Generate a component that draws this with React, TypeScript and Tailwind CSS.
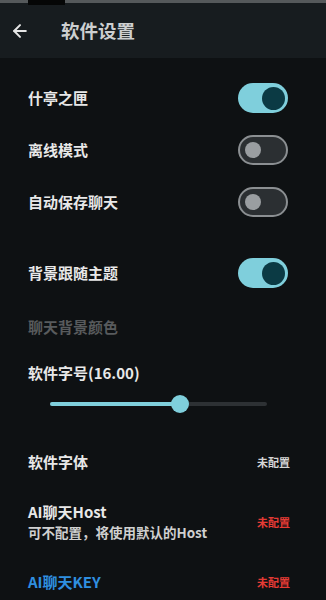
import { ArrowLeft } from "lucide-react";

const font = {
  fontFamily: '"Noto Sans CJK SC", "Noto Sans", sans-serif',
};

function Toggle({ on }: { on: boolean }) {
  return on ? (
    <div className="flex h-[30px] w-[50px] items-center justify-end rounded-full bg-[#7fcfdc] pr-[3px]">
      <div className="size-[23px] rounded-full bg-[#0b3a44]" />
    </div>
  ) : (
    <div className="flex h-[30px] w-[50px] items-center rounded-full border-2 border-[#8b8f92] bg-[#2b2f32] pl-[5px]">
      <div className="size-[16px] rounded-full bg-[#9a9ea1]" />
    </div>
  );
}

function ToggleRow({ label, on, className }: { label: string; on: boolean; className: string }) {
  return (
    <div className={`flex shrink-0 items-center justify-between pl-7 pr-[38px] ${className}`}>
      <span className="text-[15px] font-bold text-[#e8e8e8]">{label}</span>
      <Toggle on={on} />
    </div>
  );
}

export default function App() {
  return (
    <div className="flex h-[600px] w-[326px] flex-col overflow-hidden bg-[#0e1113]" style={font}>
      <div className="relative h-[3px] shrink-0 bg-[#55595b]">
        <div className="absolute left-[28px] top-0 h-[5px] w-[37px] bg-[#050606]" />
      </div>
      <div className="flex h-[55px] shrink-0 items-center bg-[#171c1f]">
        <ArrowLeft className="ml-[10px] text-[#e6e6e6]" size={20} strokeWidth={2.4} />
        <span className="ml-[31px] text-[18.5px] font-bold text-[#cdcfd0]">软件设置</span>
      </div>

      <div className="h-[14px] shrink-0" />
      <ToggleRow label="什亭之匣" on className="h-[52px]" />
      <ToggleRow label="离线模式" on={false} className="h-[52px]" />
      <ToggleRow label="自动保存聊天" on={false} className="h-[52px]" />
      <div className="h-[19px] shrink-0" />
      <ToggleRow label="背景跟随主题" on className="h-[52px]" />

      <div className="flex h-[56px] shrink-0 items-center pl-7">
        <span className="text-[15px] font-bold text-[#585b5d]">聊天背景颜色</span>
      </div>
      <div className="flex h-[36px] shrink-0 items-center pl-7">
        <span className="text-[15px] font-bold text-[#e8e8e8]">软件字号(16.00)</span>
      </div>
      <div className="flex h-[26px] shrink-0 items-center pl-[50px] pr-[59px]">
        <div className="relative h-[4px] flex-1 rounded-full bg-[#2d3134]">
          <div className="absolute left-0 top-0 h-[4px] w-[60%] rounded-full bg-[#7fcfdc]" />
          <div className="absolute left-[60%] top-1/2 size-[18px] -translate-x-1/2 -translate-y-1/2 rounded-full bg-[#7fcfdc]" />
        </div>
      </div>

      <div className="h-[18px] shrink-0" />
      <div className="flex h-[54px] shrink-0 items-center justify-between pl-7 pr-[36px]">
        <span className="text-[15px] font-bold text-[#e8e8e8]">软件字体</span>
        <span className="text-[11px] font-bold text-[#d6d6d6]">未配置</span>
      </div>
      <div className="flex h-[66px] shrink-0 items-center justify-between pl-7 pr-[36px]">
        <div className="flex flex-col leading-[21px]">
          <span className="text-[15px] font-bold text-[#e8e8e8]">AI聊天Host</span>
          <span className="text-[13.5px] font-bold text-[#d0d0d0]">可不配置，将使用默认的Host</span>
        </div>
        <span className="text-[11px] font-bold text-[#e53b35]">未配置</span>
      </div>
      <div className="flex h-[54px] shrink-0 items-center justify-between pl-7 pr-[36px]">
        <span className="text-[15px] font-bold text-[#2f8fe0]">AI聊天KEY</span>
        <span className="text-[11px] font-bold text-[#e53b35]">未配置</span>
      </div>
    </div>
  );
}
